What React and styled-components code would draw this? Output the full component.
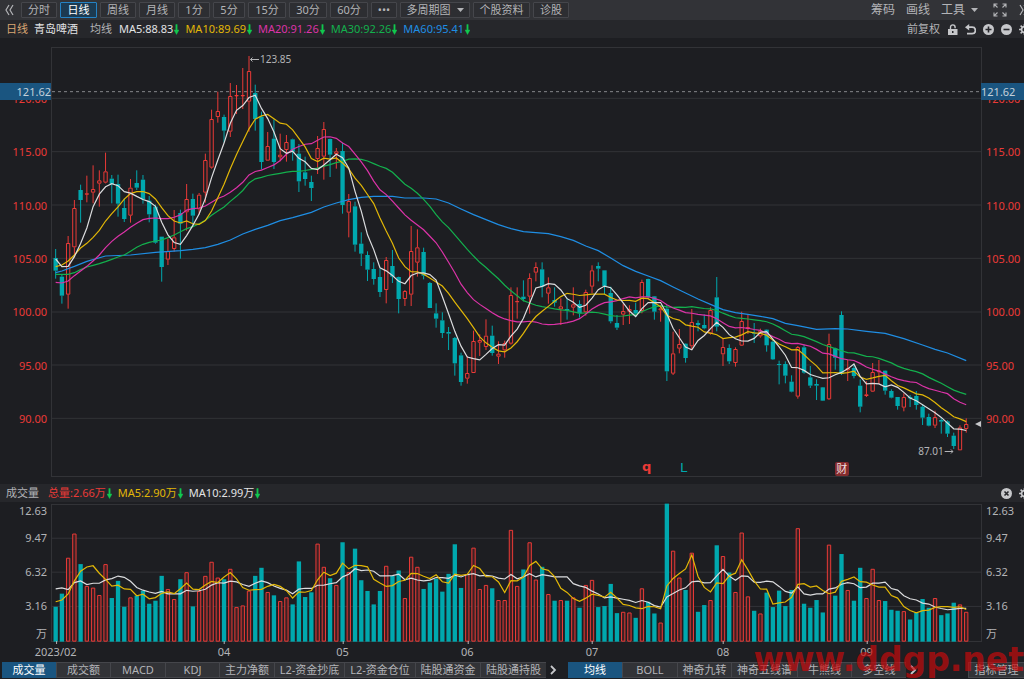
import React, { useState } from 'react';
import styled, { createGlobalStyle } from 'styled-components';

const theme = {
  bg: '#1d1e22',
  bar: '#323337',
  strip: '#26272b',
  grid: '#323337',
  border: '#45464b',
  text: '#b3b4b7',
  bright: '#e2e3e5',
  up: '#ea3a37',
  down: '#00a8ae',
  select: '#1a5580',
  yellow: '#e2b707',
  magenta: '#dc33a8',
  green: '#13b04d',
  blue: '#1f8ee4',
  arrow: '#12c84f',
};

const GlobalStyle = createGlobalStyle`
  * {
    box-sizing: border-box;
  }

  body {
    margin: 0;
    overflow-x: hidden;
    background: ${theme.bg};
    color: ${theme.text};
    font-family: 'Noto Sans', 'Noto Sans CJK SC', sans-serif;
    font-size: 11px;
    line-height: 16px;
  }

  button {
    margin: 0;
    padding: 0;
    border: 0;
    background: none;
    color: inherit;
    font: inherit;
    white-space: nowrap;
    cursor: pointer;
  }
`;

const Page = styled.main`
  position: relative;
  overflow: hidden;
`;

const Toolbar = styled.nav`
  display: flex;
  align-items: center;
  justify-content: space-between;
  height: 20px;
  padding-left: 5px;
  background: ${theme.bar};
`;

const Periods = styled.div`
  display: flex;
  align-items: center;
  gap: 3px;
`;

const CollapseButton = styled.button`
  display: flex;
  width: 13px;
`;

const PeriodButton = styled.button`
  display: flex;
  align-items: center;
  justify-content: center;
  gap: 6px;
  width: ${({ $width }) => $width}px;
  height: 16px;
  border: 1px solid ${({ $active }) => ($active ? '#2482c4' : theme.border)};
  border-radius: 1px;
  background: ${({ $active }) => ($active ? '#1c3a51' : '#2d2e32')};
  color: ${({ $active }) => ($active ? '#fff' : theme.text)};
  line-height: 14px;
`;

const Tools = styled.div`
  display: flex;
  align-items: center;
  gap: 11px;
  margin-right: -4px;
  font-size: 12px;

  svg {
    display: block;
  }
`;

const ToolButton = styled.button`
  display: flex;
  align-items: center;
  gap: 6px;
`;

const ExpandButton = styled(ToolButton)`
  margin: 0 1px 0 4px;
`;

const InfoStrip = styled.header`
  display: flex;
  align-items: center;
  justify-content: space-between;
  height: 18px;
  padding-left: 6px;
  background: ${theme.strip};
`;

const InfoGroup = styled.div`
  display: flex;
  align-items: center;
  gap: 6px;
  white-space: nowrap;
`;

const PeriodName = styled.span`
  color: #d9a673;
`;

const StockName = styled.h1`
  margin: 0 6px 0 0;
  color: ${theme.bright};
  font-size: 11px;
  font-weight: 400;
`;

const GroupName = styled.span`
  margin-right: ${({ $gap }) => $gap}px;
`;

const Average = styled.span`
  display: flex;
  align-items: center;
  gap: 1px;
  color: ${({ $color }) => $color};
`;

const StripActions = styled.div`
  display: flex;
  align-items: center;
  gap: 7px;
  margin-right: -6px;

  svg {
    display: block;
  }
`;

const Pane = styled.section`
  display: grid;
  grid-template-columns: 51px minmax(0, 1fr) 42px;
`;

const PricePane = styled(Pane)`
  position: relative;
  height: 430px;
  margin: 9px 0 7px;
`;

const VolumePane = styled(Pane)`
  height: 138px;
  margin-top: 1px;
`;

const PriceAxis = styled.div`
  display: flex;
  flex-direction: column;
  justify-content: space-between;
  align-items: ${({ $side }) => ($side === 'left' ? 'flex-end' : 'flex-start')};
  padding: 44px 4px 50px;
  color: ${theme.up};
`;

const VolumeAxis = styled.div`
  display: grid;
  grid-template-rows: 27px 34px 34px 28px 16px;
  justify-items: ${({ $side }) => ($side === 'left' ? 'end' : 'start')};
  padding: 0 4px;
`;

const CrossLabel = styled.div`
  position: absolute;
  top: 36px;
  ${({ $side }) => $side}: 0;
  width: ${({ $side }) => ($side === 'left' ? 51 : 43)}px;
  height: 17px;
  background: ${theme.select};
  color: #c3d0da;
  line-height: 18px;
  text-align: ${({ $side }) => ($side === 'left' ? 'right' : 'left')};
`;

const Plot = styled.div`
  position: relative;
  border: 1px solid ${theme.grid};
  margin-top: ${({ $top }) => $top || 0}px;
`;

const Canvas = styled.svg`
  display: block;
  width: 100%;
  height: 100%;
  overflow: visible;
`;

const Marker = styled.span`
  position: absolute;
  top: ${({ $y }) => $y}px;
  left: ${({ $x }) => $x}%;
  display: flex;
  align-items: center;
  justify-content: center;
  gap: 1px;
  height: 14px;
  transform: translateX(${({ $shift }) => $shift || '-50%'});
  color: ${({ $color }) => $color || theme.text};
  font-size: 10px;
  line-height: 14px;
`;

const NewsMarker = styled(Marker)`
  font-family: 'DejaVu Sans', sans-serif;
  font-size: 13px;
  font-weight: ${({ $bold }) => ($bold ? 700 : 400)};
`;

const ReportMarker = styled(Marker)`
  width: 14px;
  border-radius: 2px;
  background: #842b2d;
  font-size: 11px;
`;

const LastPrice = styled.svg`
  position: absolute;
  top: 373px;
  right: 0;
`;

const TimeAxis = styled.div`
  position: relative;
  height: 20px;
  margin: 0 43px 0 52px;
`;

const TimeTick = styled.span`
  position: absolute;
  top: 0;
  left: ${({ $x }) => $x}%;
  padding-top: 3px;
  transform: translateX(-50%);

  &::before {
    content: '';
    position: absolute;
    top: 0;
    left: 50%;
    width: 1px;
    height: 3px;
    background: ${theme.text};
  }
`;

const TabBar = styled.footer`
  display: flex;
  align-items: center;
  height: 18px;
  padding-left: 2px;
`;

const TabList = styled.div`
  display: flex;
  gap: 1px;
  background: ${theme.border};
`;

const Tab = styled.button`
  width: ${({ $width }) => $width}px;
  height: 16px;
  border: solid ${theme.border};
  border-width: 1px 0;
  border-color: ${({ $active }) => ($active ? theme.select : theme.border)};
  background: ${({ $active }) => ($active ? theme.select : theme.bar)};
  color: ${({ $active }) => ($active ? '#fff' : theme.text)};
  line-height: 14px;
`;

const MoreButton = styled.button`
  display: flex;
  width: 22px;
  padding-left: 4px;
`;

const ManageButton = styled(Tab)`
  margin-left: auto;
  border-left-width: 1px;
`;

const Watermark = styled.div`
  position: absolute;
  right: 0;
  bottom: 1px;
  color: rgba(200, 10, 12, 0.7);
  font: 700 33px/37px 'DejaVu Sans', sans-serif;
  pointer-events: none;
`;

const WIDTH = 2787;
const PRICE_HEIGHT = 1284;
const VOLUME_HEIGHT = 405;
const BAR = 13;
const xOf = index => 11 + index * 18.71;
const percentOf = index => (xOf(index) / WIDTH) * 100;

// direction, high, body top, body bottom, low; y grows downwards from each block's base
const blocks = [
  {
    base: -24,
    rows: [
      ['d', 627, 654, 692, 716], ['d', 704, 710, 767, 791], ['u', 588, 609, 764, 806], ['u', 480, 504, 622, 652],
      ['d', 434, 450, 480, 548], ['u', 407, 460, 463, 487], ['u', 376, 447, 458, 490], ['u', 391, 421, 431, 500],
      ['u', 338, 394, 428, 430], ['d', 405, 416, 432, 490], ['d', 404, 432, 491, 530], ['d', 476, 504, 537, 546],
      ['u', 417, 443, 527, 548], ['d', 391, 429, 443, 450], ['d', 405, 419, 478, 491], ['d', 468, 482, 523, 547],
      ['d', 494, 500, 608, 611], ['d', 590, 590, 681, 725], ['u', 596, 633, 659, 675], ['u', 510, 592, 627, 635],
      ['d', 509, 519, 551, 656], ['u', 432, 477, 517, 572], ['d', 461, 477, 527, 560], ['u', 459, 464, 508, 524],
      ['u', 341, 360, 458, 488], ['u', 209, 237, 383, 386], ['u', 155, 213, 231, 248], ['d', 224, 231, 272, 307],
      ['u', 129, 168, 275, 291], ['u', 135, 165, 168, 222], ['u', 84, 165, 168, 207], ['u', 48, 93, 185, 275],
      ['d', 134, 159, 237, 272], ['d', 215, 230, 366, 388], ['u', 276, 318, 362, 362],
    ],
  },
  {
    base: 156,
    rows: [
      ['d', 58, 116, 186, 207], ['u', 101, 164, 172, 184], ['u', 105, 126, 150, 185], ['d', 116, 118, 155, 182],
      ['d', 132, 161, 244, 276], ['d', 170, 217, 237, 257], ['d', 227, 246, 264, 303], ['u', 108, 144, 177, 222],
      ['u', 66, 87, 170, 239], ['d', 116, 117, 164, 231], ['u', 144, 154, 162, 206], ['d', 128, 153, 315, 341],
      ['u', 282, 303, 338, 412], ['d', 305, 319, 434, 455], ['d', 397, 431, 461, 498], ['d', 454, 465, 509, 543],
      ['d', 487, 507, 537, 554], ['d', 506, 531, 576, 591], ['u', 471, 480, 570, 610], ['d', 450, 498, 530, 549],
      ['d', 530, 531, 597, 640], ['u', 570, 573, 597, 618], ['u', 378, 453, 584, 618], ['u', 388, 442, 488, 530],
      ['d', 443, 456, 527, 538], ['d', 546, 549, 624, 624], ['d', 610, 640, 656, 683], ['d', 637, 661, 699, 714],
      ['d', 681, 696, 701, 750], ['d', 711, 714, 790, 827], ['d', 758, 766, 846, 857], ['u', 768, 819, 836, 851],
      ['u', 692, 723, 819, 819], ['u', 703, 720, 728, 768], ['u', 658, 707, 741, 750], ['d', 677, 707, 759, 767],
      ['u', 724, 761, 770, 792], ['u', 722, 729, 751, 773],
    ],
  },
  {
    base: 426,
    rows: [
      ['u', 292, 315, 461, 464], ['u', 292, 333, 337, 386], ['d', 271, 320, 327, 334], ['u', 250, 264, 320, 371],
      ['u', 217, 231, 248, 274], ['d', 217, 238, 290, 322], ['u', 262, 292, 311, 341], ['d', 292, 330, 338, 350],
      ['u', 325, 349, 358, 405], ['d', 325, 357, 361, 389], ['u', 292, 343, 353, 376], ['d', 331, 342, 370, 383],
      ['u', 299, 306, 367, 377], ['u', 226, 241, 290, 309], ['d', 217, 228, 236, 274], ['d', 241, 241, 288, 312],
      ['d', 290, 309, 394, 400], ['d', 375, 399, 413, 420], ['u', 341, 363, 374, 405], ['u', 346, 357, 365, 402],
      ['d', 338, 360, 371, 381], ['u', 269, 276, 363, 370], ['d', 266, 267, 321, 325], ['d', 318, 319, 365, 389],
      ['u', 345, 355, 361, 395], ['d', 345, 356, 544, 573], ['u', 425, 490, 551, 555], ['u', 417, 462, 476, 490],
      ['d', 460, 461, 504, 518], ['u', 357, 396, 469, 480], ['d', 391, 399, 405, 424], ['d', 373, 405, 415, 418],
      ['u', 352, 360, 431, 434], ['d', 261, 322, 410, 424], ['u', 446, 471, 493, 528], ['d', 463, 474, 514, 522],
    ],
  },
  {
    base: 636,
    rows: [
      ['u', 262, 267, 309, 320], ['u', 155, 183, 257, 258], ['u', 165, 201, 207, 222], ['d', 189, 218, 221, 249],
      ['u', 206, 212, 229, 233], ['d', 208, 209, 256, 275], ['d', 240, 245, 298, 300], ['d', 302, 312, 315, 373],
      ['d', 304, 312, 347, 370], ['d', 346, 365, 395, 397], ['u', 258, 261, 410, 416], ['d', 254, 262, 338, 341],
      ['d', 318, 352, 377, 384], ['d', 358, 372, 377, 420], ['d', 381, 382, 422, 423], ['u', 221, 252, 418, 420],
      ['d', 263, 265, 293, 329], ['d', 154, 165, 342, 345], ['u', 300, 324, 331, 363], ['d', 314, 324, 348, 355],
      ['d', 358, 377, 440, 457], ['u', 364, 403, 408, 411], ['u', 309, 336, 395, 396], ['u', 300, 331, 337, 372],
      ['d', 331, 332, 392, 404], ['d', 388, 393, 413, 415], ['d', 411, 411, 438, 449], ['u', 400, 411, 443, 454],
      ['d', 405, 411, 415, 441], ['d', 393, 408, 435, 449], ['d', 433, 440, 473, 495], ['d', 461, 471, 497, 499],
      ['u', 452, 471, 497, 504], ['d', 474, 480, 485, 521], ['d', 481, 484, 521, 531], ['d', 518, 527, 558, 567],
      ['u', 496, 502, 571, 571], ['u', 475, 492, 507, 518],
    ],
  },
];

const candles = blocks.flatMap(({ base, rows }) =>
  rows.map(([dir, high, top, bottom, low]) => ({
    up: dir === 'u',
    high: high + base,
    top: top + base,
    bottom: bottom + base,
    low: low + base,
  }))
);

const volumes = [
  378, 339, 232, 160, 251, 316, 321, 343, 251, 352, 301, 378, 350, 345, 330, 369, 360, 286, 325, 355,
  296, 275, 377, 331, 286, 244, 291, 296, 265, 379, 374, 330, 286, 262, 334, 344, 361, 350, 371, 243,
  349, 335, 190, 259, 293, 313, 186, 275, 205, 299, 331, 371, 331, 256, 286, 270, 352, 229, 259, 325,
  306, 295, 333, 280, 192, 322, 280, 202, 325, 313, 323, 358, 358, 149, 316, 267, 186, 297, 259, 340,
  360, 358, 360, 350, 381, 313, 298, 379, 376, 310, 397, 393, 395, 411, 323, 363, 398, 425, 71, 211,
  291, 328, 217, 393, 373, 358, 195, 227, 276, 334, 157, 347, 390, 398, 336, 379, 330, 376, 328, 144,
  369, 381, 358, 395, 193, 345, 221, 328, 360, 262, 352, 265, 358, 361, 387, 390, 391, 416, 396, 355,
  381, 352, 403, 398, 366, 371, 393,
].map(value => value - 75);

const average = (values, size, head) =>
  values.map((_, index) => {
    if (index < head.length) return head[index];
    const part = values.slice(index - size + 1, index + 1);
    return part.reduce((sum, value) => sum + value, 0) / size;
  });

const toPoints = values => values.map((value, index) => `${xOf(index)},${value}`).join(' ');

const closes = candles.map(candle => (candle.up ? candle.top : candle.bottom));
const lift = values => values.map(value => value - 24);

const ma60 = [
  [0, 818], [1, 813], [3, 799], [5, 784], [8, 768], [12, 765], [16, 757], [20, 752], [22, 748], [24, 743],
  [26, 733], [28, 720], [30, 702], [32, 688], [34, 676], [36, 662], [38, 653], [41, 637], [43, 621], [45, 609],
  [47, 599], [49, 592], [51, 589], [54, 589], [56, 594], [59, 594], [61, 597], [63, 609], [65, 627], [67, 644],
  [69, 659], [71, 674], [73, 686], [75, 695], [77, 698], [79, 701], [81, 710], [83, 721], [85, 738], [87, 752],
  [89, 774], [91, 797], [93, 814], [95, 828], [97, 842], [99, 861], [101, 879], [103, 897], [105, 913], [107, 929],
  [109, 938], [111, 943], [113, 949], [115, 956], [117, 970], [119, 977], [122, 988], [125, 986], [127, 987],
  [130, 994], [133, 1000], [136, 1016], [139, 1035], [141, 1048], [143, 1059], [146, 1082],
];

const priceLines = [
  { color: theme.blue, points: ma60.map(([index, y]) => `${xOf(index)},${y - 144}`).join(' ') },
  {
    color: theme.green,
    points: toPoints(average(closes, 30, lift([
      703, 703, 703, 698, 689, 681, 676, 671, 665, 658, 651, 645, 634, 622, 613,
      607, 603, 600, 593, 585, 575, 566, 560, 551, 541, 526, 513, 501, 484,
    ]))),
  },
  {
    color: theme.magenta,
    points: toPoints(average(closes, 20, lift([
      727, 729, 723, 707, 693, 679, 663, 645, 623, 604, 589, 576, 562, 550, 539, 535, 534, 536, 536,
    ]))),
  },
  { color: theme.yellow, points: toPoints(average(closes, 10, lift([680, 675, 663, 645, 624, 610, 592, 571, 543]))) },
  { color: '#dcdddf', points: toPoints(average(closes, 5, lift([657, 680, 679, 650]))) },
];

const volumeLines = [
  {
    color: '#dcdddf',
    points: toPoints(average(volumes, 10, [250, 247, 252, 231, 226, 237, 233, 233, 223])),
  },
  { color: theme.yellow, points: toPoints(average(volumes, 5, [288, 283, 265, 226])) },
];

const periods = [
  ['分时', 36], ['日线', 37], ['周线', 36], ['月线', 36], ['1分', 32], ['5分', 32],
  ['15分', 38], ['30分', 38], ['60分', 38], ['•••', 26], ['多周期图', 70], ['个股资料', 57], ['诊股', 36],
];

const priceAverages = [
  ['MA5:88.83', theme.bright],
  ['MA10:89.69', theme.yellow],
  ['MA20:91.26', theme.magenta],
  ['MA30:92.26', theme.green],
  ['MA60:95.41', theme.blue],
];

const volumeAverages = [
  ['总量:2.66万', theme.up],
  ['MA5:2.90万', theme.yellow],
  ['MA10:2.99万', theme.bright],
];

const prices = ['120.00', '115.00', '110.00', '105.00', '100.00', '95.00', '90.00'];
const volumeSteps = ['12.63', '9.47', '6.32', '3.16', '万'];
const months = [['2023/02', 0], ['04', 27], ['05', 46], ['06', 66], ['07', 86], ['08', 107], ['09', 130]];

const indicatorTabs = [
  ['成交量', 54], ['成交额', 53], ['MACD', 54], ['KDJ', 53], ['主力净额', 54],
  ['L2-资金抄底', 69], ['L2-资金仓位', 70], ['陆股通资金', 64], ['陆股通持股', 65],
];

const overlayTabs = [
  ['均线', 54], ['BOLL', 54], ['神奇九转', 53], ['神奇五线谱', 65], ['牛熊线', 53], ['多空线', 54],
];

const DownArrow = () => (
  <svg width="5" height="11" viewBox="0 0 5 11">
    <path d="M1.800 0.500h1.400v5.500H5L2.500 10.500 0 6h1.800z" fill={theme.arrow} stroke={theme.arrow} strokeWidth="0.4" />
  </svg>
);

const Caret = () => (
  <svg width="7" height="4" viewBox="0 0 7 4">
    <path d="M0 0h7L3.5 4z" fill={theme.text} />
  </svg>
);

const DoubleChevron = ({ right }) => (
  <svg width="9" height="12" viewBox="0 0 9 12" fill="none" stroke={theme.text} strokeWidth="1.2">
    <path d={right ? 'M1 1l3 5-3 5M5 1l3 5-3 5' : 'M4 1L1 6l3 5M8 1L5 6l3 5'} />
  </svg>
);

const ExpandIcon = () => (
  <svg width="14" height="14" viewBox="0 0 14 14" fill="none" stroke={theme.text} strokeWidth="1.1">
    <path d="M1 4.5V1h3.500M1 1l3.500 3.500M9.500 1H13v3.500M13 1L9.500 4.500M1 9.500V13h3.500M1 13l3.500-3.500M13 9.500V13H9.500M13 13L9.500 9.500" />
  </svg>
);

const LockIcon = () => (
  <svg width="11" height="11" viewBox="0 0 11 11">
    <path d="M3.500 5.500V3.200a2.300 2.300 0 0 1 4.600 0v1" fill="none" stroke="#c6c7ca" strokeWidth="1.400" />
    <path d="M1 5h9.500v6H1zM5 7v2h1.500V7z" fill="#c6c7ca" fillRule="evenodd" />
  </svg>
);

const UndoIcon = () => (
  <svg width="11" height="11" viewBox="0 0 11 11">
    <path d="M3 3.200h4.200a3.200 3.200 0 0 1 0 6.400H2" fill="none" stroke="#c6c7ca" strokeWidth="1.700" />
    <path d="M0 3.200L4.200 0v6.400z" fill="#c6c7ca" />
  </svg>
);

const RoundIcon = ({ d }) => (
  <svg width="11" height="11" viewBox="0 0 11 11">
    <circle cx="5.5" cy="5.5" r="5.5" fill="#c6c7ca" />
    <path d={d} stroke={theme.strip} strokeWidth="1.6" />
  </svg>
);

const GearIcon = () => (
  <svg width="11" height="11" viewBox="0 0 11 11" fill="none" stroke="#c6c7ca">
    <circle cx="5.5" cy="5.5" r="3" strokeWidth="1.8" />
    <path d="M5.500 0v2M5.500 9v2M0 5.500h2M9 5.500h2M1.600 1.600l1.400 1.400M8 8l1.400 1.400M9.400 1.600L8 3M3 8L1.600 9.400" strokeWidth="1.600" />
  </svg>
);

const ThinArrow = ({ right }) => (
  <svg width="9" height="5" viewBox="0 0 9 5" fill="none" stroke={theme.text}>
    <path d={right ? 'M0 2.500h8.500M6.500 0.500l2 2-2 2' : 'M9 2.500H0.500M2.500 0.500l-2 2 2 2'} />
  </svg>
);

const MoreIcon = () => (
  <svg width="7" height="10" viewBox="0 0 7 10" fill="none" stroke="#c6c7ca" strokeWidth="1.800">
    <path d="M1 1l4 4-4 4" />
  </svg>
);

const Line = ({ color, points }) => (
  <polyline points={points} fill="none" stroke={color} strokeWidth="1.2" vectorEffect="non-scaling-stroke" />
);

const GridLines = ({ rows }) =>
  rows.map(y => (
    <line key={y} x1="0" x2={WIDTH} y1={y} y2={y} stroke={theme.grid} vectorEffect="non-scaling-stroke" />
  ));

const Candle = ({ index, candle }) => {
  const x = xOf(index);
  const { up, high, top, bottom, low } = candle;
  const color = up ? theme.up : theme.down;
  return (
    <g stroke={color}>
      <path d={`M${x} ${high}V${top}M${x} ${bottom}V${low}`} vectorEffect="non-scaling-stroke" />
      {up ? (
        <rect
          x={x - 5}
          y={top + 1.5}
          width={BAR - 3}
          height={Math.max(bottom - top - 3, 1)}
          fill="none"
          vectorEffect="non-scaling-stroke"
        />
      ) : (
        <rect x={x - BAR / 2} y={top} width={BAR} height={bottom - top} fill={color} stroke="none" />
      )}
    </g>
  );
};

const VolumeBar = ({ index, top, up }) => {
  const x = xOf(index);
  const bottom = VOLUME_HEIGHT + 2;
  return up ? (
    <rect
      x={x - 5}
      y={top + 1.5}
      width={BAR - 3}
      height={bottom - top - 3}
      fill="#3d2023"
      stroke={theme.up}
      vectorEffect="non-scaling-stroke"
    />
  ) : (
    <rect x={x - BAR / 2} y={top} width={BAR} height={bottom - top} fill={theme.down} />
  );
};

const PriceChart = () => (
  <PricePane>
    <PriceAxis $side="left">
      {prices.map(price => <span key={price}>{price}</span>)}
    </PriceAxis>
    <Plot>
      <Canvas viewBox={`0 0 ${WIDTH} ${PRICE_HEIGHT}`} preserveAspectRatio="none">
        <GridLines rows={[151, 311, 471, 631, 792, 951, 1111]} />
        <line
          x1="0"
          x2={WIDTH}
          y1="131"
          y2="131"
          stroke="#85868a"
          strokeDasharray="3 3"
          vectorEffect="non-scaling-stroke"
        />
        {candles.map((candle, index) => <Candle key={index} index={index} candle={candle} />)}
        {priceLines.map(line => <Line key={line.color} {...line} />)}
      </Canvas>
      <Marker $x={percentOf(31)} $y={4} $shift="1px"><ThinArrow />123.85</Marker>
      <Marker $x={percentOf(144)} $y={396} $shift="-100%">87.01<ThinArrow right /></Marker>
      <NewsMarker $x={64} $y={412} $color={theme.up} $bold>q</NewsMarker>
      <NewsMarker $x={68} $y={413} $color={theme.down}>L</NewsMarker>
      <ReportMarker $x={85} $y={414} $color="#f0dede">财</ReportMarker>
      <LastPrice width="6" height="6" viewBox="0 0 6 6">
        <path d="M6 0v6L0 3z" fill="#c6c7ca" />
      </LastPrice>
    </Plot>
    <PriceAxis $side="right">
      {prices.map(price => <span key={price}>{price}</span>)}
    </PriceAxis>
    <CrossLabel $side="left">121.62</CrossLabel>
    <CrossLabel $side="right">121.62</CrossLabel>
  </PricePane>
);

const VolumeChart = () => (
  <VolumePane>
    <VolumeAxis $side="left">
      {volumeSteps.map(step => <span key={step}>{step}</span>)}
    </VolumeAxis>
    <Plot $top={1}>
      <Canvas viewBox={`0 0 ${WIDTH} ${VOLUME_HEIGHT}`} preserveAspectRatio="none">
        <GridLines rows={[99, 200, 302]} />
        {volumes.map((top, index) => (
          <VolumeBar key={index} index={index} top={top} up={candles[index].up} />
        ))}
        {volumeLines.map(line => <Line key={line.color} {...line} />)}
      </Canvas>
    </Plot>
    <VolumeAxis $side="right">
      {volumeSteps.map(step => <span key={step}>{step}</span>)}
    </VolumeAxis>
  </VolumePane>
);

const App = () => {
  const [period, setPeriod] = useState('日线');
  const [indicator, setIndicator] = useState('成交量');
  const [overlay, setOverlay] = useState('均线');

  return (
    <Page>
      <GlobalStyle />
      <Toolbar>
        <Periods>
          <CollapseButton aria-label="收起"><DoubleChevron /></CollapseButton>
          {periods.map(([name, width]) => (
            <PeriodButton key={name} $width={width} $active={name === period} onClick={() => setPeriod(name)}>
              {name}
              {name === '多周期图' && <Caret />}
            </PeriodButton>
          ))}
        </Periods>
        <Tools>
          <ToolButton>筹码</ToolButton>
          <ToolButton>画线</ToolButton>
          <ToolButton>工具<Caret /></ToolButton>
          <ExpandButton aria-label="全屏"><ExpandIcon /></ExpandButton>
          <ToolButton aria-label="展开"><DoubleChevron right /></ToolButton>
        </Tools>
      </Toolbar>

      <InfoStrip>
        <InfoGroup>
          <PeriodName>日线</PeriodName>
          <StockName>青岛啤酒</StockName>
          <GroupName $gap={1}>均线</GroupName>
          {priceAverages.map(([label, color]) => (
            <Average key={label} $color={color}>{label}<DownArrow /></Average>
          ))}
        </InfoGroup>
        <StripActions>
          <button>前复权</button>
          <button aria-label="锁定"><LockIcon /></button>
          <button aria-label="撤销"><UndoIcon /></button>
          <button aria-label="放大"><RoundIcon d="M5.5 2.500v6M2.500 5.500h6" /></button>
          <button aria-label="缩小"><RoundIcon d="M2.500 5.500h6" /></button>
          <button aria-label="设置"><GearIcon /></button>
        </StripActions>
      </InfoStrip>

      <PriceChart />

      <InfoStrip>
        <InfoGroup>
          <GroupName $gap={3}>成交量</GroupName>
          {volumeAverages.map(([label, color]) => (
            <Average key={label} $color={color}>{label}<DownArrow /></Average>
          ))}
        </InfoGroup>
        <StripActions>
          <button aria-label="关闭"><RoundIcon d="M3.500 3.500l4 4M7.500 3.500l-4 4" /></button>
          <button aria-label="指标设置"><GearIcon /></button>
        </StripActions>
      </InfoStrip>

      <VolumeChart />

      <TimeAxis>
        {months.map(([label, index]) => (
          <TimeTick key={label} $x={percentOf(index)}>{label}</TimeTick>
        ))}
      </TimeAxis>

      <TabBar>
        <TabList>
          {indicatorTabs.map(([name, width]) => (
            <Tab key={name} $width={width} $active={name === indicator} onClick={() => setIndicator(name)}>
              {name}
            </Tab>
          ))}
        </TabList>
        <MoreButton aria-label="更多指标"><MoreIcon /></MoreButton>
        <TabList>
          {overlayTabs.map(([name, width]) => (
            <Tab key={name} $width={width} $active={name === overlay} onClick={() => setOverlay(name)}>
              {name}
            </Tab>
          ))}
        </TabList>
        <MoreButton aria-label="更多叠加"><MoreIcon /></MoreButton>
        <ManageButton $width={56}>指标管理</ManageButton>
      </TabBar>

      <Watermark>www.ddgp.net</Watermark>
    </Page>
  );
};

export default App;
